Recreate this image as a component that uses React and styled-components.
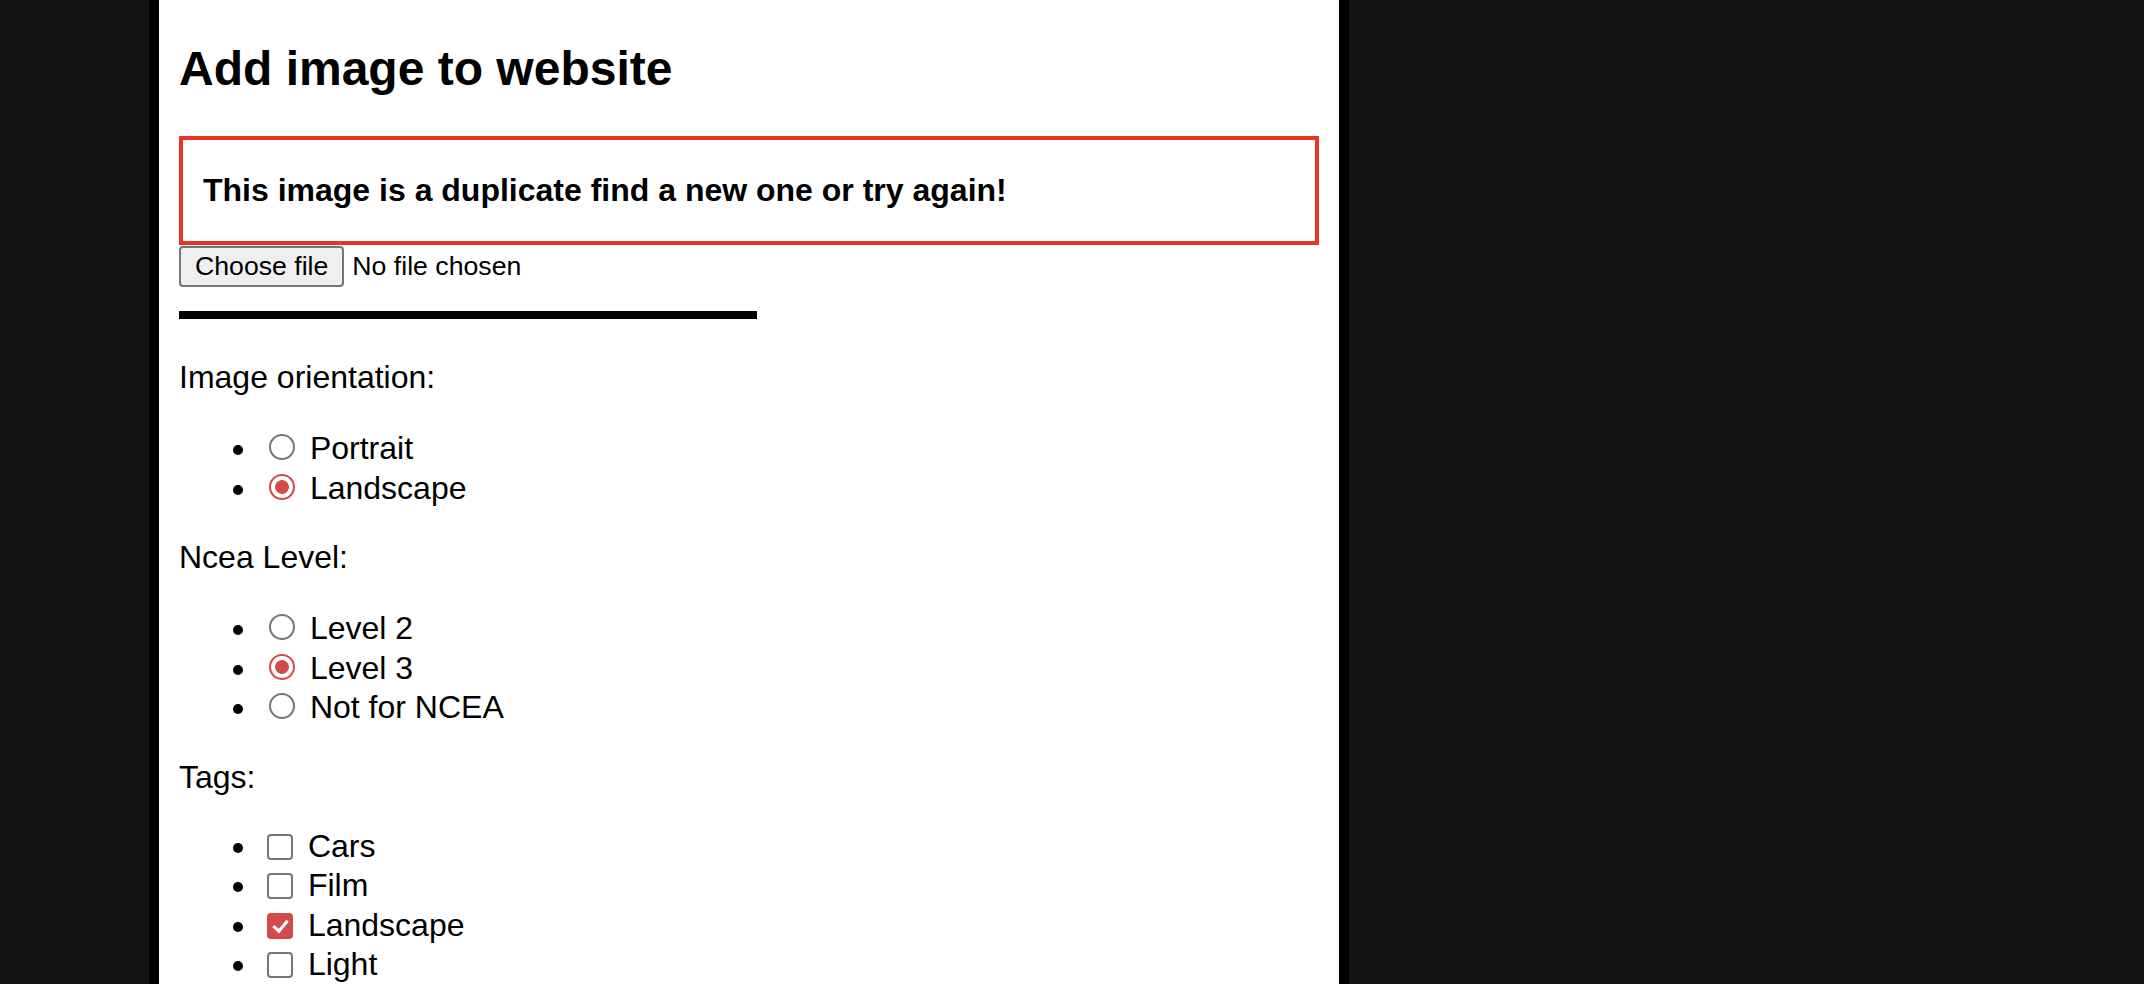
import React from "react";
import styled, { createGlobalStyle } from "styled-components";

const ACCENT = "#d14b4b";

const GlobalStyle = createGlobalStyle`
  html, body {
    margin: 0;
    padding: 0;
    background: #131313;
    overflow: hidden;
  }
  body {
    font-family: "Liberation Sans", Arial, Helvetica, sans-serif;
    font-size: 32px;
    color: #000;
  }
`;

const Page = styled.div`
  display: flex;
  align-items: flex-start;
  padding-left: 149px;
  min-height: 984px;
`;

const Panel = styled.main`
  width: 1140px;
  min-height: 1100px;
  background: #fff;
  border-left: 10px solid #000;
  border-right: 10px solid #000;
  padding: 1px 20px 40px;
  box-sizing: content-box;
`;

const Title = styled.h2`
  margin: 40px 0 40px;
  font-size: 48px;
  font-weight: 700;
  line-height: normal;
`;

const ErrorBox = styled.div`
  border: 4px solid #ec3324;
  padding: 0 20px;
`;

const ErrorText = styled.p`
  margin: 32px 0;
  font-size: 32px;
  font-weight: 700;
  line-height: normal;
`;

const FileRow = styled.div`
  display: flex;
  align-items: baseline;
  gap: 8px;
  margin-top: 1px;
  font-size: 26.67px;
`;

const FileButton = styled.button`
  font-family: "Liberation Sans", Arial, Helvetica, sans-serif;
  font-size: 26.67px;
  line-height: normal;
  color: #000;
  background: #efefef;
  border: 2px solid #767676;
  border-radius: 4px;
  padding: 3px 14px;
  margin: 0;
`;

const FileStatus = styled.span`
  line-height: normal;
`;

const Rule = styled.hr`
  width: 578px;
  height: 8px;
  margin: 24px 0 0;
  border: none;
  background: #000;
`;

const GroupLabel = styled.p`
  margin: ${(p) => (p.$first ? "40px" : "32px")} 0 32px;
  line-height: normal;
`;

const OptionList = styled.ul`
  margin: 32px 0;
  padding-left: 80px;
  list-style: disc;
`;

const Option = styled.li`
  height: 39.5px;
  line-height: normal;
  white-space: nowrap;
`;

const Radio = styled.input.attrs({ type: "radio" })`
  appearance: none;
  box-sizing: border-box;
  width: 26px;
  height: 26px;
  margin: 6px 6px 0 10px;
  vertical-align: -1px;
  border: 2px solid #767676;
  border-radius: 50%;
  background: #fff;

  &:checked {
    border: 2.5px solid ${ACCENT};
    background: radial-gradient(circle, ${ACCENT} 0 6.5px, #fff 7.2px);
  }
`;

const Check = styled.input.attrs({ type: "checkbox" })`
  appearance: none;
  position: relative;
  box-sizing: border-box;
  width: 26px;
  height: 26px;
  margin: 6px 6px 6px 8px;
  vertical-align: -9px;
  border: 2px solid #767676;
  border-radius: 4px;
  background: #fff;

  &:checked {
    border-color: ${ACCENT};
    background: ${ACCENT};
  }

  &:checked::after {
    content: "";
    position: absolute;
    left: 7px;
    top: 2px;
    width: 6px;
    height: 12px;
    border-right: 3.5px solid #fff;
    border-bottom: 3.5px solid #fff;
    transform: rotate(40deg);
  }
`;

const orientations = [
  { label: "Portrait", checked: false },
  { label: "Landscape", checked: true },
];

const levels = [
  { label: "Level 2", checked: false },
  { label: "Level 3", checked: true },
  { label: "Not for NCEA", checked: false },
];

const tags = [
  { label: "Cars", checked: false },
  { label: "Film", checked: false },
  { label: "Landscape", checked: true },
  { label: "Light", checked: false },
];

export default function App() {
  return (
    <>
      <GlobalStyle />
      <Page>
        <Panel>
          <Title>Add image to website</Title>
          <ErrorBox>
            <ErrorText>This image is a duplicate find a new one or try again!</ErrorText>
          </ErrorBox>
          <FileRow>
            <FileButton type="button">Choose file</FileButton>
            <FileStatus>No file chosen</FileStatus>
          </FileRow>
          <Rule />

          <GroupLabel $first>Image orientation:</GroupLabel>
          <OptionList>
            {orientations.map((o) => (
              <Option key={o.label}>
                <Radio name="orientation" defaultChecked={o.checked} />{" "}
                <span>{o.label}</span>
              </Option>
            ))}
          </OptionList>

          <GroupLabel>Ncea Level:</GroupLabel>
          <OptionList>
            {levels.map((o) => (
              <Option key={o.label}>
                <Radio name="level" defaultChecked={o.checked} />{" "}
                <span>{o.label}</span>
              </Option>
            ))}
          </OptionList>

          <GroupLabel>Tags:</GroupLabel>
          <OptionList>
            {tags.map((o) => (
              <Option key={o.label}>
                <Check defaultChecked={o.checked} />{" "}
                <span>{o.label}</span>
              </Option>
            ))}
          </OptionList>
        </Panel>
      </Page>
    </>
  );
}
